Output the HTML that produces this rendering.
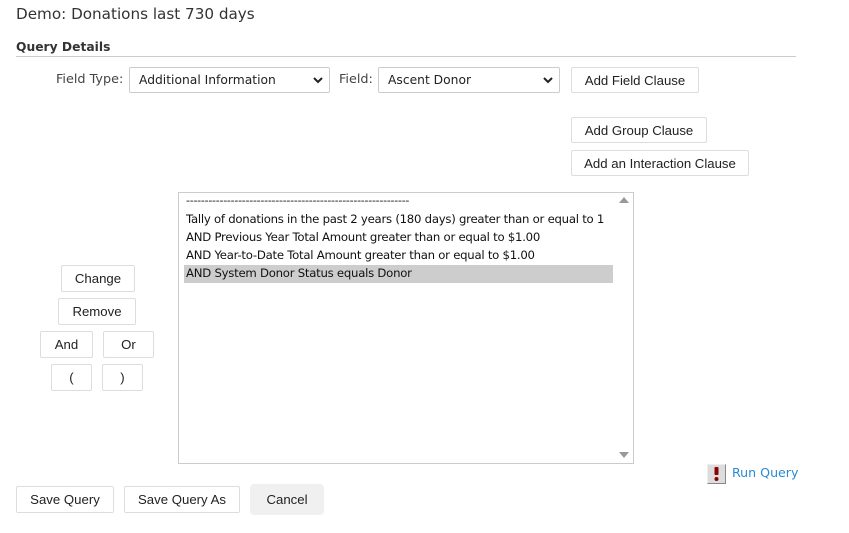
<!DOCTYPE html>
<html><head><style>
body{margin:0;width:849px;height:533px;background:#fff;font-family:"DejaVu Sans","Liberation Sans",sans-serif;color:#333;position:relative;overflow:hidden}
.a{position:absolute}
.b{position:absolute;box-sizing:border-box;border:1px solid #ddd;border-radius:2px;background:#fff;font-family:"Liberation Sans",sans-serif;font-size:13.2px;color:#222;display:flex;align-items:center;justify-content:center}
.s{position:absolute;box-sizing:border-box;border:1px solid #ccc;border-radius:2px;background:#fff;font-size:12.3px;color:#222;padding-left:9px;display:flex;align-items:center}
.s svg{position:absolute;right:6px;top:9px}
.l{position:absolute;left:186px;font-size:11.7px;color:#111;white-space:nowrap;letter-spacing:-0.25px}
</style></head><body>
<div class="a" style="left:16px;top:5px;font-size:15.2px;color:#333">Demo: Donations last 730 days</div>
<div class="a" style="left:16px;top:40px;font-size:12.3px;font-weight:bold">Query Details</div>
<div class="a" style="left:16px;top:56px;width:780px;height:1px;background:#ccc"></div>
<div class="a" style="left:56px;top:72px;font-size:12.8px;color:#444">Field Type:</div>
<div class="s" style="left:129px;top:67px;width:201px;height:26px">Additional Information<svg width="10" height="7"><path d="M1 1L5 5L9 1" stroke="#222" stroke-width="2" fill="none"/></svg></div>
<div class="a" style="left:339px;top:72px;font-size:12.8px;color:#444">Field:</div>
<div class="s" style="left:378px;top:67px;width:182px;height:26px">Ascent Donor<svg width="10" height="7"><path d="M1 1L5 5L9 1" stroke="#222" stroke-width="2" fill="none"/></svg></div>
<div class="b" style="left:571px;top:67px;width:128px;height:26px">Add Field Clause</div>
<div class="b" style="left:571px;top:117px;width:136px;height:26px">Add Group Clause</div>
<div class="b" style="left:571px;top:150px;width:178px;height:26px">Add an Interaction Clause</div>
<div class="a" style="left:178px;top:192px;width:456px;height:272px;box-sizing:border-box;border:1px solid #ccc"></div>
<div class="a" style="left:184px;top:265px;width:429px;height:18px;background:#cdcdcd"></div>
<div class="l" style="top:194px;font-size:11px">------------------------------------------------------------</div>
<div class="l" style="top:212px">Tally of donations in the past 2 years (180 days) greater than or equal to 1</div>
<div class="l" style="top:230px">AND Previous Year Total Amount greater than or equal to $1.00</div>
<div class="l" style="top:248px">AND Year-to-Date Total Amount greater than or equal to $1.00</div>
<div class="l" style="top:266px">AND System Donor Status equals Donor</div>
<svg class="a" style="left:619px;top:196px" width="10" height="8"><path d="M0 7L5 1L10 7Z" fill="#999"/></svg>
<svg class="a" style="left:619px;top:451px" width="10" height="8"><path d="M0 1L5 7L10 1Z" fill="#999"/></svg>
<div class="b" style="left:61px;top:265px;width:74px;height:27px">Change</div>
<div class="b" style="left:58px;top:298px;width:78px;height:27px">Remove</div>
<div class="b" style="left:40px;top:331px;width:53px;height:27px">And</div>
<div class="b" style="left:103px;top:331px;width:51px;height:27px">Or</div>
<div class="b" style="left:51px;top:364px;width:41px;height:27px">(</div>
<div class="b" style="left:102px;top:364px;width:41px;height:27px">)</div>
<div class="a" style="left:707px;top:464px;width:19px;height:20px;box-sizing:border-box;background:#ddd;border:1px solid #888;border-top-color:#eee;border-left-color:#eee"></div>
<svg class="a" style="left:713px;top:466px" width="7" height="16"><rect x="1.5" y="1" width="4" height="8" rx="1" fill="#8b0000"/><circle cx="3.5" cy="13" r="2" fill="#8b0000"/></svg>
<div class="a" style="left:732px;top:465px;font-size:12.6px;color:#2a8ad4">Run Query</div>
<div class="b" style="left:16px;top:486px;width:98px;height:27px">Save Query</div>
<div class="b" style="left:124px;top:486px;width:116px;height:27px">Save Query As</div>
<div class="b" style="left:250px;top:484px;width:74px;height:31px;background:#f0f0f0;border-color:#f0f0f0;border-radius:4px">Cancel</div>
</body></html>
